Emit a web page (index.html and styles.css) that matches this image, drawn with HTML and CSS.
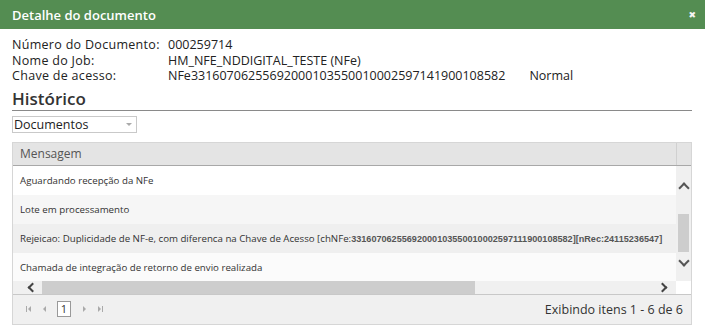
FILE: index.html
```html
<!DOCTYPE html>
<html lang="pt-BR">
<head>
  <meta charset="UTF-8">
  <title>Detalhe do documento</title>
  <link rel="stylesheet" href="styles.css">
</head>
<body>
  <div class="window">
    <div class="titlebar">
      <span class="title">Detalhe do documento</span>
      <span class="close">&#10006;</span>
    </div>
    <div class="content">
      <div class="info">
        <span class="label">Número do Documento:</span><span>000259714</span>
        <span class="label">Nome do Job:</span><span>HM_NFE_NDDIGITAL_TESTE (NFe)</span>
        <span class="label">Chave de acesso:</span><span>NFe33160706255692000103550010002597141900108582<span class="status">Normal</span></span>
      </div>
      <h2 class="section">Histórico</h2>
      <div class="dropdown">
        <span class="dropdown-text">Documentos</span>
        <span class="dropdown-arrow"></span>
      </div>

      <div class="grid">
        <div class="grid-header">
          <div class="header-cell">Mensagem</div>
          <div class="header-gap"></div>
        </div>
        <div class="grid-main">
          <div class="rows">
            <div class="row">Aguardando recepção da NFe</div>
            <div class="row alt">Lote em processamento</div>
            <div class="row hover">Rejeicao: Duplicidade de NF-e, com diferenca na Chave de Acesso [chNFe:<span class="key">33160706255692000103550010002597111900108582][nRec:24115236547]</span></div>
            <div class="row last">Chamada de integração de retorno de envio realizada</div>
          </div>
          <div class="vscroll">
            <span class="arrow-up"></span>
            <span class="vthumb"></span>
            <span class="arrow-down"></span>
          </div>
        </div>
        <div class="hscroll">
          <span class="arrow-left"></span>
          <span class="htrack"><span class="hthumb"></span></span>
          <span class="arrow-right"></span>
          <span class="corner"></span>
        </div>
        <div class="pager">
          <div class="pager-nav">
            <svg width="8" height="8" viewBox="0 0 8 8"><rect x="1" y="1" width="1" height="6" fill="#aaa"/><path d="M6 1 L3 4 L6 7 Z" fill="#aaa"/></svg>
            <svg width="8" height="8" viewBox="0 0 8 8"><path d="M5 1 L2 4 L5 7 Z" fill="#aaa"/></svg>
            <span class="page">1</span>
            <svg width="8" height="8" viewBox="0 0 8 8"><path d="M3 1 L6 4 L3 7 Z" fill="#aaa"/></svg>
            <svg width="8" height="8" viewBox="0 0 8 8"><path d="M2 1 L5 4 L2 7 Z" fill="#aaa"/><rect x="6" y="1" width="1" height="6" fill="#aaa"/></svg>
          </div>
          <div class="pager-info">Exibindo itens 1 - 6 de 6</div>
        </div>
      </div>
    </div>
  </div>
</body>
</html>
```

FILE: styles.css
```css
body {
  margin: 0;
  font-family: 'Open Sans', 'DejaVu Sans', sans-serif;
  background: #ffffff;
  color: #222;
}
.window {
  width: 705px;
  height: 330px;
  overflow: hidden;
}
.titlebar {
  height: 29px;
  background: #548d52;
  display: flex;
  align-items: center;
  justify-content: space-between;
  padding: 0 9px 0 12px;
  color: #fff;
}
.title {
  font-size: 13px;
  font-weight: 600;
}
.close {
  font-size: 9px;
  font-weight: bold;
  color: #f4f4f4;
}
.content {
  padding: 8px 13px 0 12px;
}
.info {
  display: grid;
  grid-template-columns: 156px auto;
  font-size: 12.5px;
  line-height: 15.5px;
  color: #222;
}
.label {
  letter-spacing: 0.3px;
}
.status {
  margin-left: 24px;
}
.section {
  margin: 4px 0 0;
  font-size: 17px;
  font-weight: 600;
  color: #333;
  line-height: 21px;
  padding-bottom: 1px;
  border-bottom: 1px solid #8a8a8a;
}
.dropdown {
  margin-top: 5px;
  width: 123px;
  height: 15px;
  border: 1px solid #c9c9c9;
  display: flex;
  align-items: center;
  justify-content: space-between;
}
.dropdown-text {
  font-size: 12.5px;
  padding-left: 1px;
  color: #222;
}
.dropdown-arrow {
  width: 0;
  height: 0;
  margin-right: 4px;
  border-left: 3px solid transparent;
  border-right: 3px solid transparent;
  border-top: 3px solid #aaa;
}
.grid {
  margin-top: 9px;
  border: 1px solid #d6d6d6;
  width: 678px;
}
.grid-header {
  display: flex;
  height: 22px;
  background: #e4e4e4;
  border-bottom: 1px solid #a8a8a8;
}
.header-cell {
  flex: 1;
  font-size: 12px;
  color: #555;
  padding-left: 7px;
  line-height: 22px;
}
.header-gap {
  width: 14px;
  border-left: 1px solid #d0d0d0;
}
.grid-main {
  display: flex;
  height: 115px;
}
.rows {
  flex: 1;
  overflow: hidden;
}
.row {
  height: 29px;
  line-height: 29px;
  font-size: 9.7px;
  color: #333;
  padding-left: 7px;
  white-space: nowrap;
  background: #fff;
}
.row.alt {
  background: #f6f6f6;
}
.row.hover {
  background: #efefef;
}
.row.last {
  background: #fbfbfb;
}
.key {
  font-family: 'Liberation Sans', Arial, sans-serif;
  font-size: 9.1px;
  font-weight: bold;
  color: #555;
}
.vscroll {
  width: 15px;
  background: #f0f0f0;
  position: relative;
}
.arrow-up, .arrow-down {
  position: absolute;
  left: 4px;
  width: 6px;
  height: 6px;
  border-left: 2px solid #555;
  border-top: 2px solid #555;
}
.arrow-up {
  top: 18px;
  transform: rotate(45deg);
}
.arrow-down {
  top: 91px;
  transform: rotate(225deg);
}
.vthumb {
  position: absolute;
  left: 2px;
  top: 48px;
  width: 11px;
  height: 38px;
  background: #cdcdcd;
}
.hscroll {
  display: flex;
  align-items: center;
  height: 13px;
  background: #f0f0f0;
}
.arrow-left, .arrow-right {
  width: 5px;
  height: 5px;
  border-left: 2px solid #444;
  border-top: 2px solid #444;
}
.arrow-left {
  margin-left: 16px;
  transform: rotate(-45deg);
}
.arrow-right {
  margin-right: 10px;
  transform: rotate(135deg);
}
.htrack {
  flex: 1;
  height: 13px;
  margin: 0 6px 0 6px;
}
.hthumb {
  display: block;
  width: 433px;
  height: 13px;
  background: #cdcdcd;
}
.corner {
  width: 15px;
  height: 13px;
  background: #fff;
}
.pager {
  display: flex;
  justify-content: space-between;
  align-items: center;
  height: 29px;
  background: #f0f0f0;
  border-top: 1px solid #c8c8c8;
  padding: 0 8px 0 12px;
}
.pager-nav {
  display: flex;
  align-items: center;
  gap: 8px;
}
.page {
  font-size: 11px;
  color: #333;
  border: 1px solid #999;
  background: #fff;
  width: 12px;
  height: 14px;
  line-height: 14px;
  text-align: center;
  margin: 0 1px 0 0;
}
.pager-info {
  font-size: 12.5px;
  color: #333;
}
```
